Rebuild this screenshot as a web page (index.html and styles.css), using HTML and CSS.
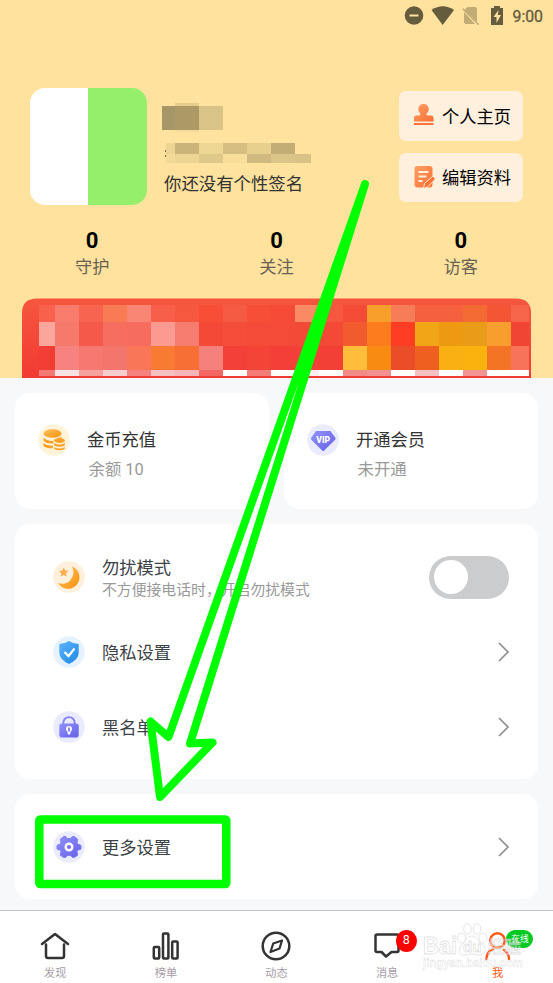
FILE: index.html
```html
<!DOCTYPE html>
<html lang="zh-CN">
<head>
<meta charset="utf-8">
<title>我</title>
<link rel="stylesheet" href="styles.css">
</head>
<body>
<svg class="defs" width="0" height="0">
  <defs>
    <linearGradient id="orange" x1="0" y1="0" x2="1" y2="1"><stop offset="0" stop-color="#ffa066"/><stop offset="1" stop-color="#fb6d32"/></linearGradient>
    <linearGradient id="gold" x1="0" y1="0" x2="1" y2="1"><stop offset="0" stop-color="#ffc05c"/><stop offset="1" stop-color="#fb920f"/></linearGradient>
    <linearGradient id="purple" x1="0" y1="0" x2="1" y2="1"><stop offset="0" stop-color="#9292fa"/><stop offset="1" stop-color="#645fe8"/></linearGradient>
    <linearGradient id="blue" x1="0" y1="0" x2="1" y2="1"><stop offset="0" stop-color="#5db4fb"/><stop offset="1" stop-color="#1e88e8"/></linearGradient>
    <linearGradient id="red" x1="0" y1="0" x2="0" y2="1"><stop offset="0" stop-color="#f6573e"/><stop offset="1" stop-color="#f23a34"/></linearGradient>
  </defs>
</svg>

<header class="hero">
  <div class="status">
    <svg width="104" height="22" viewBox="404 5 104 22">
      <circle cx="414" cy="15.500" r="9.300" fill="#655b3d"/><path d="M409.500 15.500h9" stroke="#fee29e" stroke-width="2"/>
      <path d="M431.500 10Q442.700 2.500 454 10L442.700 25Z" fill="#655b3d"/>
      <path d="M467.500 7H475q2 0 2 2v13L464.500 10Z M464 12l11 12h-9q-2 0-2-2Z" fill="#c1ac78"/><path d="M462.700 8.700l16 16" stroke="#c1ac78" stroke-width="1.500"/>
      <path d="M491 8h3V6h6v2h3v17h-12Z" fill="#655b3d"/><path d="M498.500 10l-5 7h3v6l4.500-8h-3.200Z" fill="#fee29e"/>
    </svg>
    <span class="clock">9:00</span>
  </div>
  <div class="profile">
    <div class="avatar"></div>
    <div class="identity">
      <svg class="masked" width="150" height="65" viewBox="162 103 150 65" shape-rendering="crispEdges">
        <path fill="#a79667" d="M162 106h13v24h-13z"/><path fill="#e3cc8c" d="M175 103h24v3h-24z"/><path fill="#ad9966" d="M175 106h24v24h-24z"/><path fill="#f6db98" d="M175 130h24v2h-24z"/><path fill="#d9c386" d="M199 106h24v24h-24z"/>
        <path fill="#786b4b" d="M165 150h1v2h-1zM165 155h1v2h-1z"/>
        <path fill="#ecd492" d="M166 143h9v11h-9z"/><path fill="#cab47a" d="M175 143h24v11h-24z"/><path fill="#edd593" d="M199 143h24v11h-24z"/><path fill="#d6be83" d="M223 143h24v11h-24z"/><path fill="#e7cf8e" d="M247 143h24v11h-24z"/><path fill="#c2ad76" d="M271 143h24v11h-24z"/>
        <path fill="#f2d996" d="M166 154h9v9h-9z"/><path fill="#ecd492" d="M175 154h24v9h-24z"/><path fill="#dec88a" d="M199 154h24v9h-24z"/><path fill="#f9de9a" d="M223 154h24v9h-24z"/><path fill="#d0b980" d="M247 154h24v9h-24z"/><path fill="#dbc588" d="M271 154h24v9h-24z"/><path fill="#d9c286" d="M295 154h16v9h-16z"/>
      </svg>
      <p class="signature">你还没有个性签名</p>
    </div>
    <div class="actions">
      <div class="action">
        <svg width="22" height="24" viewBox="0 0 22 24"><path d="M10.500 1a5.200 5.200 0 0 1 3.300 9.200Q13 11.500 14 12.500h4q2.500 0 2.500 2.500v3.500H1V15q0-2.500 2.500-2.500h3Q8 11.500 7.200 10.200A5.200 5.200 0 0 1 10.500 1Z" fill="url(#orange)"/><path d="M1 21h19.500" stroke="#fb7338" stroke-width="2"/></svg>
        个人主页
      </div>
      <div class="action">
        <svg width="22" height="24" viewBox="0 0 22 24"><rect x="1.500" y="1" width="18" height="21.500" rx="3" fill="url(#orange)"/><path d="M5.500 7h10M5.500 11.500h8M5.500 16h4" stroke="#fff0dd" stroke-width="1.800"/><path d="M10.500 23.500l1-5 8.500-7.500 2.500 3-8 8Z" fill="#fb7035" stroke="#fff0dd" stroke-width="1"/></svg>
        编辑资料
      </div>
    </div>
  </div>
  <div class="stats">
    <div class="stat"><b>0</b><span>守护</span></div>
    <div class="stat"><b>0</b><span>关注</span></div>
    <div class="stat"><b>0</b><span>访客</span></div>
  </div>
  <svg class="banner" width="509" height="80" viewBox="22 298 509 80">
    <path d="M22 378V313q0-14.500 15-14.500H516q15 0 15 14.500v65Z" fill="url(#red)"/>
    <g id="mosaic" shape-rendering="crispEdges"></g>
  </svg>
</header>

<main class="content">
  <div class="pair">
    <section class="card tile">
      <svg width="32" height="32" viewBox="0 0 32 32"><circle cx="16" cy="16" r="15.800" fill="#fff3da"/><g fill="#fda026"><ellipse cx="14.500" cy="9.500" rx="9" ry="4.300" fill="url(#gold)"/><path d="M5.500 13.500q3 3.400 9 3.400l1-.1v2.700q-8 .4-10-3ZM5.500 19q3 2.800 9.500 2.800v2.500q-7.500 0-9.500-2.600ZM17.500 14.500q3.500-.3 6-2v1.500q-3-.5-6 .5Z"/><ellipse cx="21.500" cy="16.500" rx="5.300" ry="2.600"/><path d="M16.200 19q5 3 10.600 0v2.400q-5.300 2.800-10.600 0ZM16.200 23.200q5 2.800 10.600 0v1.500q-5.300 3-10.600 0Z"/></g></svg>
      <div class="tile-text"><h2>金币充值</h2><p>余额 10</p></div>
    </section>
    <section class="card tile">
      <svg width="32" height="32" viewBox="0 0 32 32"><circle cx="16" cy="16" r="15.800" fill="#ebebff"/><path d="M9 7h14.500l5 7q.3 1-.4 1.800L17 26.800q-.8.700-1.600 0L4.400 15.800Q3.700 15 4 14Z" fill="url(#purple)"/><text class="vip" x="16.200" y="18.800">VIP</text></svg>
      <div class="tile-text"><h2>开通会员</h2><p>未开通</p></div>
    </section>
  </div>

  <section class="card list">
    <div class="row">
      <svg width="32" height="32" viewBox="0 0 32 32"><circle cx="16" cy="16" r="15.800" fill="#ffefdd"/><path d="M19 5.500a11.500 11.500 0 1 1-14 16.500q8 2.500 12.500-3Q22.500 13 19 5.500Z" fill="url(#gold)"/><path d="M10.700 6.500l1.500 3 3.300.4-2.500 2.300.7 3.400-3-1.700-3 1.700.6-3.400-2.400-2.300 3.300-.4Z" fill="#ffae50"/></svg>
      <div class="row-text"><h2>勿扰模式</h2><p>不方便接电话时，开启勿扰模式</p></div>
      <span class="switch"></span>
    </div>
    <div class="row">
      <svg width="32" height="32" viewBox="0 0 32 32"><circle cx="16" cy="16" r="15.800" fill="#e6f3ff"/><path d="M16 5q4.500 3 9.700 3v8.500q0 7-9.700 11.500-9.700-4.500-9.700-11.500V8Q11.500 8 16 5Z" fill="url(#blue)"/><path d="M11.500 16l4 4 6-7.500" fill="none" stroke="#fff" stroke-width="2.200"/></svg>
      <div class="row-text single"><h2>隐私设置</h2></div>
      <svg class="chevron" width="14" height="22" viewBox="0 0 14 22"><path d="M2 2l9 9-9 9"/></svg>
    </div>
    <div class="row">
      <svg width="32" height="32" viewBox="0 0 32 32"><circle cx="16" cy="16" r="15.800" fill="#ebebff"/><path d="M10.300 14v-2.200a5.700 5.700 0 0 1 11.400 0V14" fill="none" stroke="#8383f4" stroke-width="1.900"/><rect x="6.300" y="12.500" width="19.400" height="14" rx="2.800" fill="url(#purple)"/><path d="M16 15a3 3 0 0 1 3 3q0 1.500-1.300 2.500L17 23.500h-2l-.7-3Q13 19.500 13 18a3 3 0 0 1 3-3Z" fill="#fff"/><path d="M16 16.500v4" stroke="#7773ee" stroke-width="1.700"/></svg>
      <div class="row-text single"><h2>黑名单</h2></div>
      <svg class="chevron" width="14" height="22" viewBox="0 0 14 22"><path d="M2 2l9 9-9 9"/></svg>
    </div>
  </section>

  <section class="card more">
    <div class="row">
      <svg width="32" height="32" viewBox="0 0 32 32"><circle cx="16" cy="16" r="15.800" fill="#ebebff"/><path d="M11 5.500h1.500l2 2h3l2-2H21l3.500 2.500v1.500L24 12l1 1.300 2.500.7.500 1v2.500l-.5 1L25 19l-1 1.300.5 2.700v1.500L21 26.500h-1.500l-2-2h-3l-2 2H11l-3.500-2V23l.5-2.700L7 19l-2.500-.5-.5-1V15l.5-1L7 13.300 8 12l-.5-2.500V8Z" fill="url(#purple)" stroke="#7f7cf2" stroke-linejoin="round"/><circle cx="16" cy="16" r="3.300" fill="#7570ea" stroke="#fff" stroke-width="2.400"/></svg>
      <div class="row-text single"><h2>更多设置</h2></div>
      <svg class="chevron" width="14" height="22" viewBox="0 0 14 22"><path d="M2 2l9 9-9 9"/></svg>
    </div>
  </section>
</main>

<nav class="tabs">
  <div class="tab"><svg width="32" height="32" viewBox="0 0 32 32"><path d="M3 14L16 4l13 10M7 14.500V26q0 2 2 2h14q2 0 2-2V14.500"/></svg>发现</div>
  <div class="tab"><svg width="32" height="32" viewBox="0 0 32 32"><rect x="3.800" y="17" width="5.400" height="11.500" rx="1"/><rect x="13" y="3.500" width="5.400" height="25" rx="1"/><rect x="22.200" y="11.500" width="5.400" height="17" rx="1"/></svg>榜单</div>
  <div class="tab"><svg width="32" height="32" viewBox="0 0 32 32"><circle cx="16" cy="16" r="13.300"/><path class="thin" d="M22 10.500l-2.500 8L10.500 22l2.700-8.500Z"/></svg>动态</div>
  <div class="tab"><svg width="32" height="32" viewBox="0 0 32 32"><path d="M6 4.500h20q1.500 0 1.500 1.500v14.500q0 1.500-1.500 1.500h-5.500L15 26.500 10.500 22H6q-1.500 0-1.500-1.500V6Q4.500 4.500 6 4.500Z"/></svg>消息<span class="badge">8</span></div>
  <div class="tab active"><svg width="32" height="32" viewBox="0 0 32 32"><circle cx="15.500" cy="10.500" r="7.300"/><path d="M4.500 29q0-7 6.500-10M22 20q5 3.500 5 9"/></svg>我<span class="online">在线</span></div>
</nav>

<svg class="watermark" width="110" height="60" viewBox="418 918 110 60">
  <g class="paw"><ellipse cx="461.500" cy="938" rx="4" ry="5"/><ellipse cx="467.500" cy="929" rx="3.800" ry="5.300"/><ellipse cx="477" cy="929" rx="3.800" ry="5.300"/><ellipse cx="483" cy="938" rx="4" ry="5"/><path d="M472 936q5 0 8 7 7 4 5 9-2 4-6 3-7-2-14 0-5 1-6-4 0-5 5-8 3-7 8-7Z"/></g>
  <text class="brand" x="423" y="954" textLength="34" lengthAdjust="spacingAndGlyphs">Bai</text>
  <text class="du" x="463" y="952">du</text>
  <text class="brand hanzi" x="488" y="953" textLength="33" lengthAdjust="spacingAndGlyphs">经验</text>
  <text class="site" x="423" y="967" textLength="100" lengthAdjust="spacingAndGlyphs">jingyan.baidu.com</text>
</svg>

<svg class="annotation" width="553" height="983" viewBox="0 0 553 983">
  <path d="M365 184L168.500 737 150.500 721.500 160 797 212.500 742.500 190 743.500Z"/>
  <rect x="39.300" y="819.500" width="187" height="64.500" rx="1"/>
</svg>
<script src="mosaic.js"></script>
</body>
</html>
```
FILE: styles.css
```css
* { box-sizing: border-box; margin: 0; padding: 0; }
body {
  width: 553px; height: 983px; overflow: hidden; position: relative;
  display: flex; flex-direction: column;
  background: #f7f8fa; color: #333;
  font-family: Roboto, "Noto Sans CJK SC", sans-serif;
}
svg { display: block; flex: none; }
.defs { position: absolute; }
h2 { font-weight: 400; font-size: 17.300px; line-height: 26px; }

.hero { flex: none; height: 378px; background: #fee29e; display: flex; flex-direction: column; }
.status { height: 88px; padding: 5px 9.500px 0 0; display: flex; justify-content: flex-end; gap: 5px; }
.clock { width: 31px; font-size: 15.800px; line-height: 23px; color: #655b3d; white-space: nowrap; -webkit-text-stroke: .3px #655b3d; }
.profile { display: flex; height: 117px; padding: 0 30px; }
.avatar { width: 117px; height: 117px; border-radius: 15px; background: linear-gradient(90deg, #fff 58px, #95ef6b 58px); }
.identity { margin-left: 15px; padding-top: 15px; }
.signature { font-size: 17.400px; line-height: 26px; padding-left: 2px; margin-top: 3px; }
.actions { margin: 3px 0 0 auto; display: flex; flex-direction: column; gap: 12px; }
.action { width: 124px; height: 49.500px; border-radius: 7px; background: #fff0dd; color: #000; padding: 0 0 1px 14px; display: flex; align-items: center; gap: 7px; font-size: 17.300px; white-space: nowrap; }
.stats { display: flex; padding-top: 23px; height: 93px; }
.stat { flex: 1; display: flex; flex-direction: column; align-items: center; }
.stat b { color: #000; font-size: 22px; line-height: 26px; }
.stat span { color: #696253; font-size: 17.300px; line-height: 26px; }
.banner { margin-left: 22px; }

.content { flex: none; padding: 15px; height: 532px; display: flex; flex-direction: column; gap: 15px; }
.card { flex: none; background: #fff; border-radius: 15px; }
.pair { flex: none; display: flex; gap: 15px; }
.pair .tile { flex: 1; height: 116px; padding: 31px 0 0 23px; display: flex; gap: 17px; }
.tile-text { padding-top: 3px; }
.tile p { margin: 4px 0 0 1.500px; font-size: 16.400px; line-height: 25px; color: #999; }
.vip { font: 900 8.500px Roboto, sans-serif; fill: #fff; text-anchor: middle; }
.list { height: 255px; padding: 15.500px 29px 0 38px; }
.row { height: 75px; display: flex; align-items: center; gap: 17px; }
.row h2 { color: #3c4246; }
.row .single { padding-top: 1px; }
.row p { font-size: 14.850px; line-height: 18px; color: #999; white-space: nowrap; }
.switch { width: 80px; height: 43px; margin-left: auto; border-radius: 22px; background: #cacccd; padding: 4.500px; }
.switch::before { content: ""; display: block; width: 34px; height: 34px; border-radius: 50%; background: #fff; }
.chevron { margin-left: auto; margin-right: -2px; fill: none; stroke: #8c8f92; stroke-width: 1.700; }
.more { height: 105px; padding: 15.500px 29px 0 38px; }

.tabs { flex: none; height: 73px; border-top: 1px solid #bfc0c5; background: #fff; display: flex; }
.tab { position: relative; flex: 1; display: flex; flex-direction: column; align-items: center; padding-top: 19px; font-size: 11.200px; line-height: 23px; color: #a79ca7; }
.tab svg { fill: none; stroke: #333; stroke-width: 2.500; stroke-linecap: round; stroke-linejoin: round; }
.tab .thin { stroke-width: 2.200; }
.active { color: #ff5b16; }
.active svg { stroke: #ff5b16; }
.badge { position: absolute; left: 64px; top: 19px; width: 21px; height: 22px; border-radius: 50%; background: #f00; color: #fff; font-size: 12.500px; line-height: 20px; text-align: center; }
.online { position: absolute; left: 64px; top: 19px; width: 27px; height: 18px; border-radius: 9px; background: #00ca22; color: #fff; font-size: 8.700px; line-height: 18px; text-align: center; }

.watermark { position: absolute; left: 418px; top: 918px; }
.watermark text { fill: rgba(255,255,255,.5); stroke: rgba(200,200,200,.55); stroke-width: .8px; font-family: "Liberation Sans", "Noto Sans CJK SC", sans-serif; font-weight: 700; }
.watermark .paw { fill: rgba(255,255,255,.3); stroke: #e2e2e2; stroke-width: .9; }
.watermark .brand { font-size: 23px; }
.watermark .hanzi { font-size: 17px; }
.watermark .du { font-size: 15px; }
.watermark .site { font-size: 12px; stroke-width: .5px; }

.annotation { position: absolute; left: 0; top: 0; pointer-events: none; }
.annotation path, .annotation rect { fill: none; stroke: #0f0; stroke-width: 8.500; stroke-linejoin: round; }
.annotation path { stroke-width: 8; }
```
FILE: mosaic.js
```js
// Blurred banner tiles: one colour per column.
const rows = [
  { y: 305, h: 17, c: "f8614b f87b6b f7644f f97b53 f98675 f75f4a f6583f f84d37 f55a42 f74e38 f54b36 f98a63 f6573f f34b36 f89e2b f77d59 f5603f f5603f f36a32 f45635 f66449" },
  { y: 322, h: 24, c: "fba59c f57a6b f4594a f66e60 f66c5f fb9a90 f57c6e f54937 f44d39 f44b38 f44a38 f34a38 f34936 f25b2d fd7c1e ff3c24 f0a616 ed9912 e99c17 f79e2e f04434" },
  { y: 346, h: 24, c: "f23d35 f8827f f77871 f4756c f97758 f97a33 f76f34 f6807c f34039 f44438 f33f38 f34038 f34037 ffbd3a f88c13 ec4d29 ef6020 f9b012 fab20f f27424 f7745b" },
  { y: 370, h: 6, c: "f57a75 f7e1e2 f5a29f f6cdcf f5827e f5bfc1 f6b4b7 f36863 ffffff f57d79 ffffff f9eff0 ffffff f28b87 f19290 ffffff f4c1c2 ffffff f39393 ffffff ffffff" }
];
const group = document.getElementById("mosaic");
for (const row of rows) {
  row.c.split(" ").forEach((color, i) => {
    const rect = document.createElementNS("http://www.w3.org/2000/svg", "rect");
    rect.setAttribute("x", i ? 31 + 24 * i : 39);
    rect.setAttribute("y", row.y);
    rect.setAttribute("width", i === 0 ? 16 : i === 20 ? 18 : 24);
    rect.setAttribute("height", row.h);
    rect.setAttribute("fill", "#" + color);
    group.appendChild(rect);
  });
}
```
